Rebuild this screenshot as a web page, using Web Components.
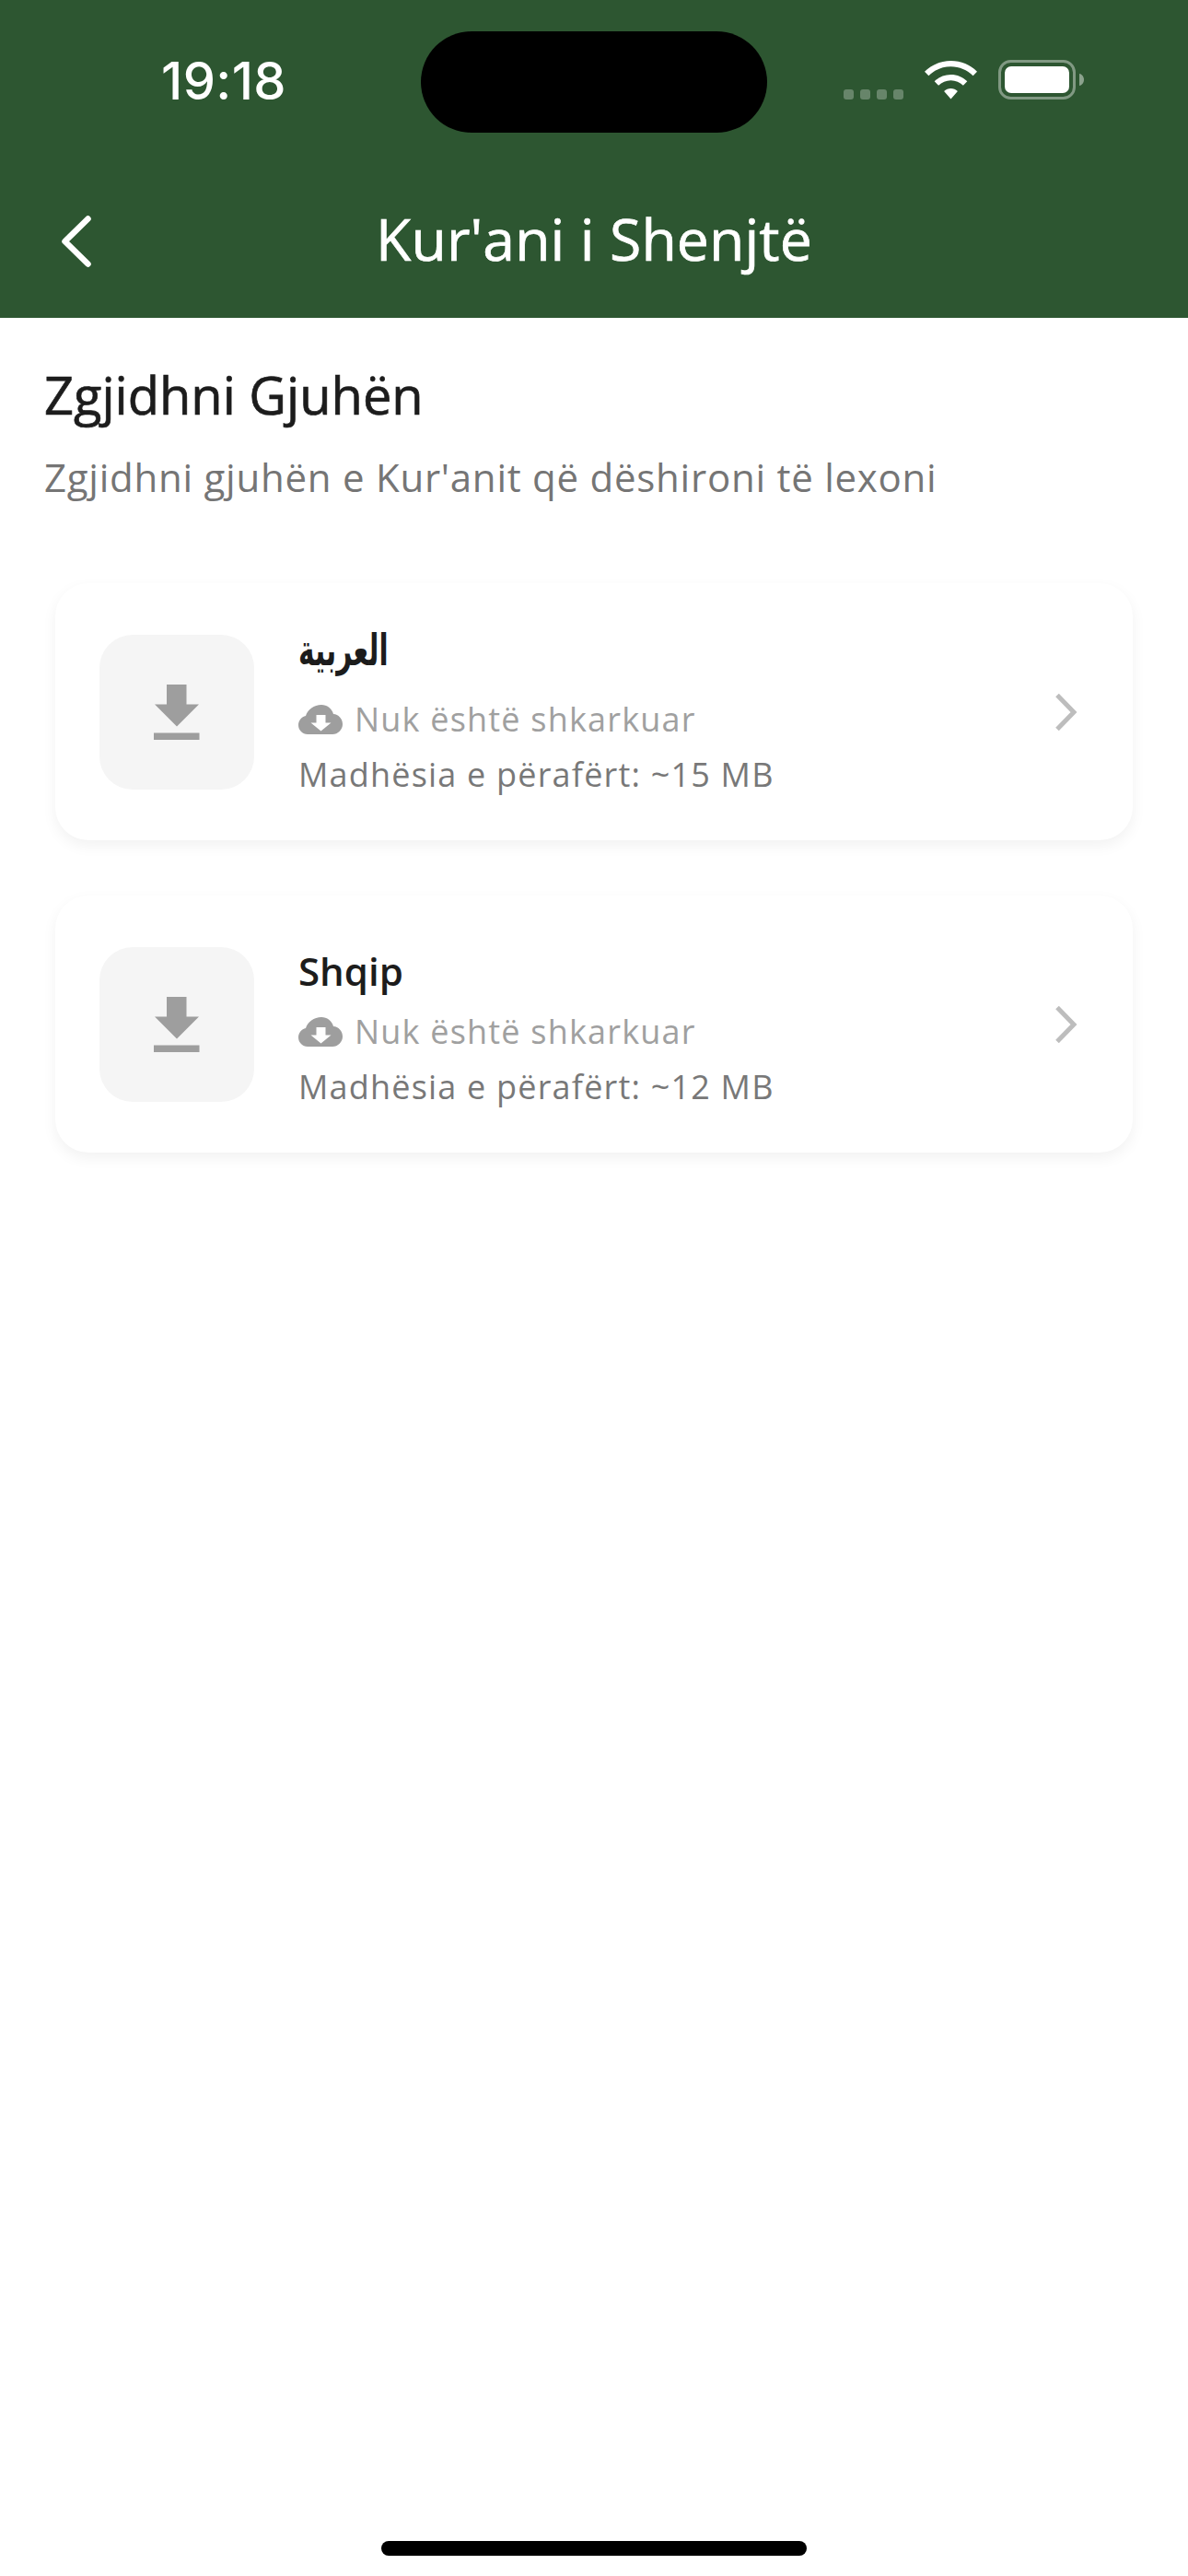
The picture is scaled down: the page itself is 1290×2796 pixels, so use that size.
<!DOCTYPE html>
<html lang="sq">
<head>
<meta charset="utf-8">
<title>Kur'ani i Shenjtë</title>
<style>
  html, body { margin: 0; padding: 0; background: #fff; }
  body { font-family: "Open Sans", "DejaVu Sans", sans-serif; }
</style>
</head>
<body>
<app-screen>
  <app-header title="Kur'ani i Shenjtë"></app-header>
  <section-intro heading="Zgjidhni Gjuhën" text="Zgjidhni gjuhën e Kur'anit që dëshironi të lexoni"></section-intro>
  <language-card arabic name="العربية" size="Madhësia e përafërt: ~15 MB"></language-card>
  <language-card name="Shqip" size="Madhësia e përafërt: ~12 MB"></language-card>
</app-screen>

<script>
class AppScreen extends HTMLElement {
  constructor() {
    super();
    this.attachShadow({ mode: "open" });
    this.shadowRoot.innerHTML = `
      <style>
        :host { display: flex; flex-direction: column; width: 1290px; height: 2796px; overflow: hidden; background: #fff; }
        .bar { margin: auto auto 22px; width: 462px; height: 16px; border-radius: 8px; background: #000; }
      </style>
      <slot></slot>
      <div class="bar"></div>
    `;
  }
}

class AppHeader extends HTMLElement {
  constructor() {
    super();
    this.attachShadow({ mode: "open" });
    this.shadowRoot.innerHTML = `
      <style>
        :host { display: block; height: 345px; background: #2d5631; color: #fff; }
        .status { display: flex; align-items: flex-start; height: 204px; box-sizing: border-box; padding-top: 34px; }
        .time { width: 457px; box-sizing: border-box; padding: 22px 0 0 175px; font: 550 56px/64px Inter, sans-serif; letter-spacing: 0.4px; }
        .island { width: 376px; height: 110px; border-radius: 55px; background: #000; }
        .icons { display: flex; align-items: flex-end; height: 74px; padding-left: 83px; }
        .dots { display: flex; gap: 7px; margin-right: 23px; }
        .dots i { width: 11px; height: 11px; border-radius: 3px; background: rgba(255,255,255,.28); }
        .wifi { margin-right: 23px; display: block; }
        .nav { display: flex; align-items: center; height: 141px; margin-top: -13px; position: relative; }
        .back { display: block; margin-left: 66px; }
        h1 { position: absolute; left: 0; right: 0; top: 28px; margin: 0; text-align: center; font: 500 62.500px/80px "Open Sans", sans-serif; letter-spacing: 0.1px; -webkit-text-stroke: 0.7px #fff; }
      </style>
      <div class="status">
        <div class="time">19:18</div>
        <div class="island"></div>
        <div class="icons">
          <div class="dots"><i></i><i></i><i></i><i></i></div>
          <svg class="wifi" width="57" height="42" viewBox="0 0 57 42"><path fill="#fff" d="M28.5 0C39.5 0 49.600 4.300 57 11.700L52.600 16.200C46.300 10 37.800 6.300 28.500 6.300S10.700 10 4.400 16.200L0 11.700C7.400 4.300 17.500 0 28.500 0ZM28.500 15C35.300 15 41.600 17.700 46.300 22.300L41.900 26.800C38.300 23.400 33.600 21.300 28.500 21.300S18.700 23.400 15.100 26.800L10.700 22.300C15.400 17.700 21.700 15 28.500 15ZM28.500 30C31.200 30 33.900 31 35.900 33L28.500 41.500L21.100 33C23.100 31 25.800 30 28.500 30Z"/></svg>
          <svg width="93" height="43" viewBox="0 0 93 43"><rect x="1.500" y="1.500" width="81" height="40" rx="12" fill="none" stroke="#fff" stroke-opacity=".4" stroke-width="3"/><rect x="7" y="7" width="70" height="29" rx="7" fill="#fff"/><path fill="#fff" fill-opacity=".45" d="M88 15c3 .6 5 3.400 5 6.500s-2 5.900-5 6.500z"/></svg>
        </div>
      </div>
      <div class="nav">
        <svg class="back" width="36" height="60" viewBox="0 0 36 60"><path fill="none" stroke="#fff" stroke-width="6.500" stroke-linecap="round" stroke-linejoin="round" d="M29.500 5.500L4.500 30L29.500 54.500"/></svg>
        <h1></h1>
      </div>
    `;
  }
  connectedCallback() {
    this.shadowRoot.querySelector("h1").textContent = this.getAttribute("title");
  }
}

class SectionIntro extends HTMLElement {
  constructor() {
    super();
    this.attachShadow({ mode: "open" });
    this.shadowRoot.innerHTML = `
      <style>
        :host { display: block; padding: 45px 48px 0; margin-bottom: 85px; }
        h2 { margin: 0; font: 500 56px/76px "Open Sans", sans-serif; color: #1c1c1c; -webkit-text-stroke: 0.7px #1c1c1c; }
        p { margin: 22px 0 0; font: 400 42px/60px "Open Sans", sans-serif; color: #757575; letter-spacing: 0.75px; }
      </style>
      <h2></h2>
      <p></p>
    `;
  }
  connectedCallback() {
    this.shadowRoot.querySelector("h2").textContent = this.getAttribute("heading");
    this.shadowRoot.querySelector("p").textContent = this.getAttribute("text");
  }
}

class LanguageCard extends HTMLElement {
  constructor() {
    super();
    this.attachShadow({ mode: "open" });
    this.shadowRoot.innerHTML = `
      <style>
        :host { display: flex; align-items: center; box-sizing: border-box; width: 1170px; height: 279px; margin: 0 60px 60px; padding: 0 48px; border-radius: 36px; background: #fff; box-shadow: 0 6px 16px rgba(0,0,0,.055); }
        .thumb { flex: none; display: flex; align-items: center; justify-content: center; width: 168px; height: 168px; border-radius: 36px; background: #f5f5f5; margin-right: 48px; }
        .info { flex: 1; padding-top: 10px; }
        .name { height: 66px; font: 600 42px/60px "Open Sans", "DejaVu Sans", sans-serif; color: #1c1c1c; }
        :host([arabic]) .name span { display: inline-block; font: 700 47px/60px "DejaVu Sans", sans-serif; transform: translateY(-9px) scaleX(.63); transform-origin: left center; }
        .status { display: flex; align-items: center; gap: 13px; height: 60px; font: 400 36px/60px "Open Sans", sans-serif; letter-spacing: 1.200px; color: #a0a0a0; }
        .size { height: 60px; font: 400 36px/60px "Open Sans", sans-serif; letter-spacing: 1.200px; color: #787878; }
        .chev { flex: none; display: block; margin-right: 10px; }
      </style>
      <div class="thumb">
        <svg width="50" height="60" viewBox="0 0 50 60"><path fill="#9e9e9e" d="M14 0H35.500V21.500H49L25 45.500L1 21.500H14ZM0 52.500H49.500V60H0Z"/></svg>
      </div>
      <div class="info">
        <div class="name"><span></span></div>
        <div class="status">
          <svg width="48" height="32" viewBox="0 0 48 32"><path fill="#9e9e9e" fill-rule="evenodd" d="M25 0C31 0 36.500 4 38 10C43.500 10.500 48 15 48 21C48 27 43 32 37 32H10C4.500 32 0 27.500 0 22C0 17 3.500 13 8 12C10 5 17 0 25 0ZM19.500 11V19.500H13.500L24.500 28.500L35.500 19.500H29.500V11Z"/></svg>
          <span>Nuk është shkarkuar</span>
        </div>
        <div class="size"></div>
      </div>
      <svg class="chev" width="26" height="40" viewBox="0 0 26 40"><path fill="none" stroke="#bdbdbd" stroke-width="5" d="M2 1.500L20 20L2 38.500"/></svg>
    `;
  }
  connectedCallback() {
    this.shadowRoot.querySelector(".name span").textContent = this.getAttribute("name");
    this.shadowRoot.querySelector(".size").textContent = this.getAttribute("size");
  }
}

customElements.define("app-screen", AppScreen);
customElements.define("app-header", AppHeader);
customElements.define("section-intro", SectionIntro);
customElements.define("language-card", LanguageCard);
</script>
</body>
</html>
